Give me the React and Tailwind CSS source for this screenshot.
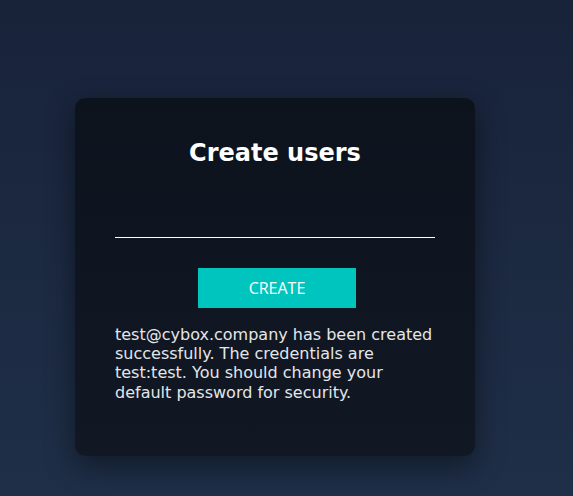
import React from "react";

const App = () => {
  return (
    <div className="min-h-[496px] w-full bg-gradient-to-b from-[#18233a] to-[#1f2f48] pt-[98px] font-['DejaVu_Sans']">
      <div className="ml-[75px] w-[400px] h-[358px] rounded-[10px] bg-gradient-to-b from-[#0d131d] to-[#111824] px-10 pt-[39px] shadow-[0_10px_30px_rgba(0,0,0,0.45)]">
        <h1 className="text-center text-[24px] leading-8 font-bold text-white">Create users</h1>

        {/* email field */}
        <div className="mt-[29px]">
          <input
            type="text"
            className="w-full h-[40px] bg-transparent border-b border-white text-white outline-none"
          />
        </div>

        <div className="flex justify-center mt-[30px] pl-[4px]">
          <button className="w-[158px] h-[40px] bg-[#00c5be] text-white text-[16px] font-['Open_Sans'] font-normal">
            CREATE
          </button>
        </div>

        <p className="mt-[17px] text-[16px] leading-[1.2] text-[#e3e6ea]">
          test@cybox.company has been created successfully. The credentials are test:test. You should change your default password for security.
        </p>
      </div>
    </div>
  );
};

export default App;
